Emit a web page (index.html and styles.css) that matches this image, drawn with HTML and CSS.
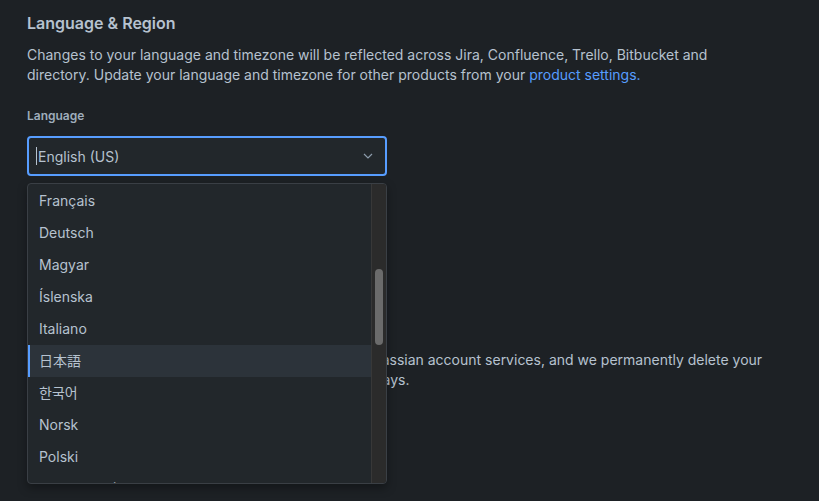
FILE: index.html
```html
<!DOCTYPE html>
<html>
<head>
	<link rel="stylesheet" href="styles.css">
</head>
<body>
	<div class="page">
		<h2 class="title">Language &amp; Region</h2>
		<p class="desc">Changes to your language and timezone will be reflected across Jira, Confluence, Trello, Bitbucket and directory. Update your language and timezone for other products from your <a href="#">product settings.</a></p>

		<label class="label">Language</label>
		<div class="field">
			<div class="select">
				<span class="caret"></span><span class="value">English (US)</span>
				<svg class="chev" width="10" height="6" viewBox="0 0 10 6"><path d="M1 1 L5 5 L9 1" fill="none" stroke="#8c9bab" stroke-width="1.2"/></svg>
			</div>
			<div class="menu">
				<ul class="options">
					<li>Français</li>
					<li>Deutsch</li>
					<li>Magyar</li>
					<li>Íslenska</li>
					<li>Italiano</li>
					<li class="active">日本語</li>
					<li>한국어</li>
					<li>Norsk</li>
					<li>Polski</li>
					<li>Português (Brasil)</li>
				</ul>
				<div class="track"><div class="thumb"></div></div>
			</div>
		</div>

		<label class="label under">Time zone</label>
		<div class="select under-select"></div>

		<h2 class="title del">Delete account</h2>
		<p class="desc">When you delete your account, you lose access to Atlassian account services, and we permanently delete your personal data. You can cancel the deletion within 14 days.</p>
	</div>
</body>
</html>
```

FILE: styles.css
```css
html, body {margin:0;min-height:501px;background:#1d2125;}
body {color:#b6c2cf;font-family:Inter, "Noto Sans CJK JP", "Noto Sans CJK KR", sans-serif;}
.page {padding:13px 27px;width:745px;min-height:475px;}
.title {font-size:16px;line-height:20px;font-weight:600;margin:0;color:#b6c2cf;}
.desc {font-size:14px;line-height:20px;margin:12px 0 0 0;}
.desc a {color:#579dff;text-decoration:none;}
.label {display:block;font-size:12px;line-height:16px;font-weight:600;color:#9fadbc;margin-top:23px;}
.field {position:relative;width:360px;margin-top:12px;z-index:2;}
.select {box-sizing:border-box;height:40px;width:360px;border:2px solid #579dff;border-radius:4px;background:#22272b;display:flex;align-items:center;padding-left:7px;font-size:14px;}
.caret {width:1px;height:18px;background:#b6c2cf;margin-right:1px;}
.value {flex:1;}
.chev {margin-right:12px;}
.menu {position:absolute;left:0;top:47px;width:360px;height:301px;box-sizing:border-box;border:1px solid #3a3f45;border-radius:4px;background:#22272b;overflow:hidden;box-shadow:0 4px 10px rgba(0,0,0,0.35);}
.options {list-style:none;margin:0;padding:1px 0 0 0;}
.options li {height:32px;line-height:32px;padding-left:11px;font-size:14px;color:#b6c2cf;}
.options li.active {background:#2c333a;box-shadow:inset 2px 0 0 #579dff;}
.track {position:absolute;top:0;right:0;bottom:0;width:14px;background:#2b2b2b;border-left:1px solid #383838;}
.thumb {position:absolute;left:3px;top:85px;width:8px;height:76px;border-radius:4px;background:#6b6b6b;}
.under {margin-top:24px;}
.under-select {border-color:#2c333a;margin-top:4px;}
.del {margin-top:58px;}
```
